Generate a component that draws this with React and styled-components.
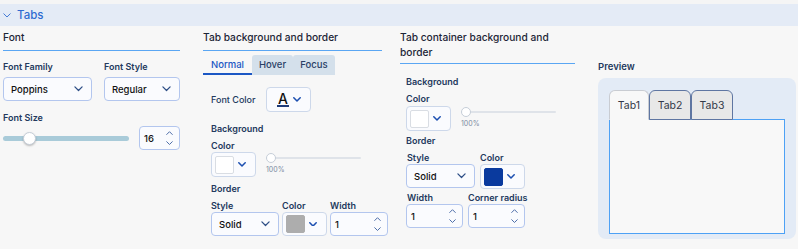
import React from 'react'
import styled, { createGlobalStyle } from 'styled-components'

const GlobalStyle = createGlobalStyle`
  html, body {
    margin: 0;
    padding: 0;
    background: #f7f7f7;
  }
  body {
    font-family: Inter, "Noto Sans", "Liberation Sans", sans-serif;
    color: #1f2d44;
  }
`

const Chevron = ({ size = 9, color = '#2d4e86', up = false, width = 1.4 }) => (
  <svg width={size} height={size * 0.6} viewBox="0 0 10 6" style={{ display: 'block' }}>
    <path
      d={up ? 'M1 5 L5 1 L9 5' : 'M1 1 L5 5 L9 1'}
      fill="none"
      stroke={color}
      strokeWidth={width}
      strokeLinecap="round"
      strokeLinejoin="round"
    />
  </svg>
)

const Page = styled.div`
  width: 798px;
  padding-top: 4px;
  background: #f5f5f5;
`

const Header = styled.div`
  height: 22px;
  background: #e4ebf6;
  display: flex;
  align-items: center;
  gap: 6px;
  padding-left: 3px;
  color: #2e6bd1;
  font-size: 11.5px;
  font-weight: 500;
`

const Body = styled.div`
  display: flex;
  align-items: flex-start;
  padding: 4px 0 0 3px;
  background: #f7f7f7;
  height: 219px;
  box-sizing: border-box;
`

const Column = styled.div`
  width: ${p => p.$w}px;
  margin-right: ${p => p.$gap || 0}px;
  display: flex;
  flex-direction: column;
`

const SectionTitle = styled.div`
  font-size: 10.2px;
  font-weight: 500;
  line-height: 15px;
  color: #1c2536;
  padding: 0 0 ${p => p.$pb || 5}px;
  border-bottom: 1.5px solid #5aa6f3;
`

const Inner = styled.div`
  padding-left: ${p => p.$pl || 0}px;
  display: flex;
  flex-direction: column;
`

const Label = styled.div`
  font-size: 9px;
  font-weight: 600;
  line-height: 13px;
  white-space: nowrap;
  color: #23395d;
  margin-top: ${p => p.$mt || 0}px;
  margin-bottom: ${p => p.$mb || 0}px;
  padding-left: ${p => p.$pl || 0}px;
`

const Row = styled.div`
  display: flex;
  align-items: ${p => p.$align || 'flex-start'};
  gap: ${p => p.$gap || 0}px;
  margin-top: ${p => p.$mt || 0}px;
`

const Field = styled.div`
  display: flex;
  flex-direction: column;
  width: ${p => p.$w}px;
`

const Box = styled.div`
  box-sizing: border-box;
  width: ${p => p.$w}px;
  height: ${p => p.$h || 24}px;
  border: 1px solid ${p => p.$border || '#b3c6ee'};
  border-radius: 4px;
  background: #fafbfe;
  display: flex;
  align-items: center;
  justify-content: space-between;
  padding: 0 ${p => p.$pr || 8}px 0 ${p => p.$pl || 7}px;
  font-size: 9.5px;
  font-weight: 500;
  color: #111;
`

const Spinner = styled.div`
  display: flex;
  flex-direction: column;
  gap: 5px;
`

const Swatch = styled.div`
  width: 19px;
  height: 18px;
  box-sizing: border-box;
  border-radius: 2px;
  background: ${p => p.$color};
  border: 1px solid ${p => (p.$color === '#ffffff' ? '#d9dde3' : p.$color)};
`

const SliderTrack = styled.div`
  position: relative;
  width: ${p => p.$w}px;
  height: ${p => p.$h}px;
  border-radius: ${p => p.$h}px;
  background: ${p => p.$color};
`

const Thumb = styled.div`
  position: absolute;
  top: 50%;
  left: ${p => p.$left}px;
  width: ${p => p.$size}px;
  height: ${p => p.$size}px;
  margin-top: -${p => p.$size / 2}px;
  box-sizing: border-box;
  border-radius: 50%;
  background: #fff;
  border: 1px solid #c6ced8;
  box-shadow: ${p => (p.$shadow ? '0 1px 2px rgba(0,0,0,0.25)' : 'none')};
`

const OpacityWrap = styled.div`
  margin-left: 10px;
  padding-top: 5px;
`

const Percent = styled.div`
  font-size: 7px;
  color: #7d8ba0;
  margin-top: 6px;
`

const SubTabs = styled.div`
  display: flex;
  margin-top: 4px;
  height: 20px;
`

const SubTab = styled.div`
  box-sizing: border-box;
  width: ${p => p.$w}px;
  display: flex;
  align-items: center;
  justify-content: center;
  font-size: 9.5px;
  font-weight: 500;
  color: ${p => (p.$active ? '#1b57c4' : '#2a3f66')};
  background: ${p => (p.$active ? 'transparent' : '#d4e0eb')};
  border-bottom: 2px solid ${p => (p.$active ? '#1b57c4' : 'transparent')};
  border-radius: ${p => (p.$active ? '0' : '3px 3px 0 0')};
`

const FontColorLabel = styled(Label)`
  width: 55px;
  font-weight: 500;
`

const FontA = styled.div`
  font-size: 14px;
  font-weight: 500;
  line-height: 13px;
  color: #111;
  border-bottom: 2px solid #1d3a78;
  padding: 0 1px;
`

const PreviewTitle = styled.div`
  font-size: 9.5px;
  font-weight: 600;
  color: #23395d;
  line-height: 13px;
  margin-top: 30px;
`

const PreviewPanel = styled.div`
  margin-top: 5px;
  width: 198px;
  height: 161px;
  box-sizing: border-box;
  background: #e3ebf6;
  border-radius: 8px;
  padding: 12px 11px 5px;
  display: flex;
  flex-direction: column;
`

const PreviewTabs = styled.div`
  display: flex;
  position: relative;
  z-index: 1;
  margin-bottom: -1px;
`

const PreviewTab = styled.div`
  box-sizing: border-box;
  width: ${p => p.$w}px;
  height: 30px;
  display: flex;
  align-items: center;
  justify-content: center;
  font-size: 10.5px;
  color: #333a48;
  border-radius: 6px 6px 0 0;
  background: ${p => (p.$active ? '#f8f8f8' : '#e8e8e8')};
  border: 1px solid ${p => (p.$active ? '#c9ccd2' : '#5f76a2')};
  border-bottom-color: ${p => (p.$active ? '#f8f8f8' : '#5f76a2')};
`

const PreviewContent = styled.div`
  flex: 1;
  background: #f8f8f8;
  border: 1.5px solid #4da1f5;
`

const Select = ({ w, value }) => (
  <Box $w={w}>
    <span>{value}</span>
    <Chevron size={9} />
  </Box>
)

const NumberInput = ({ w, value }) => (
  <Box $w={w} $pl={4} $pr={6}>
    <span>{value}</span>
    <Spinner>
      <Chevron size={7} up color="#4a6aa6" />
      <Chevron size={7} color="#4a6aa6" />
    </Spinner>
  </Box>
)

const ColorPicker = ({ color }) => (
  <Box $w={45} $h={25} $border="#cdd8ea" $pl={3} $pr={9}>
    <Swatch $color={color} />
    <Chevron size={8} color="#1c4fb0" width={1.9} />
  </Box>
)

const Opacity = () => (
  <OpacityWrap>
    <SliderTrack $w={95} $h={2} $color="#dfe3e9">
      <Thumb $left={0} $size={10} />
    </SliderTrack>
    <Percent>100%</Percent>
  </OpacityWrap>
)

export default function App() {
  return (
    <Page>
      <GlobalStyle />
      <Header>
        <Chevron size={8} color="#2e6bd1" width={1.1} />
        <span>Tabs</span>
      </Header>
      <Body>
        <Column $w={177} $gap={23}>
          <SectionTitle>Font</SectionTitle>
          <Row $gap={12} $mt={9}>
            <Field $w={89}>
              <Label $mb={4}>Font Family</Label>
              <Select w={89} value="Poppins" />
            </Field>
            <Field $w={76}>
              <Label $mb={4}>Font Style</Label>
              <Select w={76} value="Regular" />
            </Field>
          </Row>
          <Label $mt={10} $mb={2}>Font Size</Label>
          <Row $align="center" $gap={10}>
            <SliderTrack $w={126} $h={5} $color="#a9cbd9">
              <Thumb $left={20} $size={13} $shadow />
            </SliderTrack>
            <NumberInput w={41} value="16" />
          </Row>
        </Column>

        <Column $w={179} $gap={18}>
          <SectionTitle>Tab background and border</SectionTitle>
          <SubTabs>
            <SubTab $w={49} $active>Normal</SubTab>
            <SubTab $w={41}>Hover</SubTab>
            <SubTab $w={42}>Focus</SubTab>
          </SubTabs>
          <Inner $pl={8}>
            <Row $align="center" $mt={12}>
              <FontColorLabel>Font Color</FontColorLabel>
              <Box $w={45} $h={25} $border="#cdd8ea" $pl={10} $pr={9}>
                <FontA>A</FontA>
                <Chevron size={8} color="#1c4fb0" width={1.9} />
              </Box>
            </Row>
            <Label $mt={10}>Background</Label>
            <Label $mt={4}>Color</Label>
            <Row>
              <ColorPicker color="#ffffff" />
              <Opacity />
            </Row>
            <Label $mt={5}>Border</Label>
            <Row $gap={3} $mt={4}>
              <Field $w={68}>
                <Label>Style</Label>
                <Select w={68} value="Solid" />
              </Field>
              <Field $w={45}>
                <Label>Color</Label>
                <Box $w={45} $border="#cdd8ea" $pl={3} $pr={9}>
                  <Swatch $color="#adadad" />
                  <Chevron size={8} color="#1c4fb0" width={1.9} />
                </Box>
              </Field>
              <Field $w={58}>
                <Label>Width</Label>
                <NumberInput w={58} value="1" />
              </Field>
            </Row>
          </Inner>
        </Column>

        <Column $w={175} $gap={23}>
          <SectionTitle $pb={3}>Tab container background and border</SectionTitle>
          <Inner $pl={6}>
            <Label $mt={11}>Background</Label>
            <Label $mt={4} $mb={1}>Color</Label>
            <Row>
              <ColorPicker color="#ffffff" />
              <Opacity />
            </Row>
            <Label $mt={3}>Border</Label>
            <Row $gap={5} $mt={4}>
              <Field $w={69}>
                <Label $pl={1}>Style</Label>
                <Select w={69} value="Solid" />
              </Field>
              <Field $w={45}>
                <Label>Color</Label>
                <ColorPicker color="#0a3a9e" />
              </Field>
            </Row>
            <Row $gap={5} $mt={2}>
              <Field $w={57}>
                <Label $pl={1}>Width</Label>
                <NumberInput w={57} value="1" />
              </Field>
              <Field $w={57}>
                <Label>Corner radius</Label>
                <NumberInput w={57} value="1" />
              </Field>
            </Row>
          </Inner>
        </Column>

        <Column $w={198}>
          <PreviewTitle>Preview</PreviewTitle>
          <PreviewPanel>
            <PreviewTabs>
              <PreviewTab $w={40} $active>Tab1</PreviewTab>
              <PreviewTab $w={42}>Tab2</PreviewTab>
              <PreviewTab $w={42}>Tab3</PreviewTab>
            </PreviewTabs>
            <PreviewContent />
          </PreviewPanel>
        </Column>
      </Body>
    </Page>
  )
}
